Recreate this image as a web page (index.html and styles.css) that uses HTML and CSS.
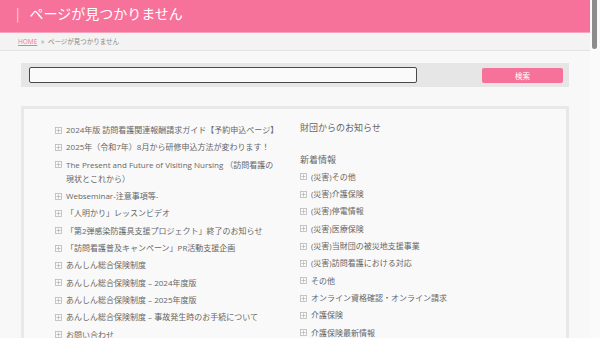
FILE: index.html
```html
<!DOCTYPE html>
<html lang="ja">
<head>
<meta charset="utf-8">
<title>ページが見つかりません</title>
<link rel="stylesheet" href="styles.css">
</head>
<body>
<div class="page">
  <header class="site-title">
    <span class="bar">|</span>
    <h1>ページが見つかりません</h1>
  </header>
  <nav class="breadcrumb"><a href="#">HOME</a> <span class="sep">»</span> ページが見つかりません</nav>
  <main class="main">
    <form class="search">
      <input class="search-input" type="text">
      <button class="search-btn" type="button">検索</button>
    </form>
    <section class="content">
      <ul class="list left">
        <li><svg class="ico" viewBox="0 0 7 7"><rect x="0.5" y="0.5" width="6" height="6"/><path d="M3.5 1.5v4M1.5 3.5h4"/></svg><span>2024年版 訪問看護関連報酬請求ガイド【予約申込ページ】</span></li>
        <li><svg class="ico" viewBox="0 0 7 7"><rect x="0.5" y="0.5" width="6" height="6"/><path d="M3.5 1.5v4M1.5 3.5h4"/></svg><span>2025年（令和7年）8月から研修申込方法が変わります！</span></li>
        <li><svg class="ico" viewBox="0 0 7 7"><rect x="0.5" y="0.5" width="6" height="6"/><path d="M3.5 1.5v4M1.5 3.5h4"/></svg><span>The Present and Future of Visiting Nursing （訪問看護の現状とこれから）</span></li>
        <li><svg class="ico" viewBox="0 0 7 7"><rect x="0.5" y="0.5" width="6" height="6"/><path d="M3.5 1.5v4M1.5 3.5h4"/></svg><span>Webseminar-注意事項等-</span></li>
        <li><svg class="ico" viewBox="0 0 7 7"><rect x="0.5" y="0.5" width="6" height="6"/><path d="M3.5 1.5v4M1.5 3.5h4"/></svg><span>「人明かり」レッスンビデオ</span></li>
        <li><svg class="ico" viewBox="0 0 7 7"><rect x="0.5" y="0.5" width="6" height="6"/><path d="M3.5 1.5v4M1.5 3.5h4"/></svg><span>「第2弾感染防護具支援プロジェクト」終了のお知らせ</span></li>
        <li><svg class="ico" viewBox="0 0 7 7"><rect x="0.5" y="0.5" width="6" height="6"/><path d="M3.5 1.5v4M1.5 3.5h4"/></svg><span>「訪問看護普及キャンペーン」PR活動支援企画</span></li>
        <li><svg class="ico" viewBox="0 0 7 7"><rect x="0.5" y="0.5" width="6" height="6"/><path d="M3.5 1.5v4M1.5 3.5h4"/></svg><span>あんしん総合保険制度</span></li>
        <li><svg class="ico" viewBox="0 0 7 7"><rect x="0.5" y="0.5" width="6" height="6"/><path d="M3.5 1.5v4M1.5 3.5h4"/></svg><span>あんしん総合保険制度 – 2024年度版</span></li>
        <li><svg class="ico" viewBox="0 0 7 7"><rect x="0.5" y="0.5" width="6" height="6"/><path d="M3.5 1.5v4M1.5 3.5h4"/></svg><span>あんしん総合保険制度 – 2025年度版</span></li>
        <li><svg class="ico" viewBox="0 0 7 7"><rect x="0.5" y="0.5" width="6" height="6"/><path d="M3.5 1.5v4M1.5 3.5h4"/></svg><span>あんしん総合保険制度 – 事故発生時のお手続について</span></li>
        <li><svg class="ico" viewBox="0 0 7 7"><rect x="0.5" y="0.5" width="6" height="6"/><path d="M3.5 1.5v4M1.5 3.5h4"/></svg><span>お問い合わせ</span></li>
      </ul>
      <div class="right">
        <h2 class="heading first">財団からのお知らせ</h2>
        <h2 class="heading">新着情報</h2>
        <ul class="list">
          <li><svg class="ico" viewBox="0 0 7 7"><rect x="0.5" y="0.5" width="6" height="6"/><path d="M3.5 1.5v4M1.5 3.5h4"/></svg><span>(災害)その他</span></li>
          <li><svg class="ico" viewBox="0 0 7 7"><rect x="0.5" y="0.5" width="6" height="6"/><path d="M3.5 1.5v4M1.5 3.5h4"/></svg><span>(災害)介護保険</span></li>
          <li><svg class="ico" viewBox="0 0 7 7"><rect x="0.5" y="0.5" width="6" height="6"/><path d="M3.5 1.5v4M1.5 3.5h4"/></svg><span>(災害)停電情報</span></li>
          <li><svg class="ico" viewBox="0 0 7 7"><rect x="0.5" y="0.5" width="6" height="6"/><path d="M3.5 1.5v4M1.5 3.5h4"/></svg><span>(災害)医療保険</span></li>
          <li><svg class="ico" viewBox="0 0 7 7"><rect x="0.5" y="0.5" width="6" height="6"/><path d="M3.5 1.5v4M1.5 3.5h4"/></svg><span>(災害)当財団の被災地支援事業</span></li>
          <li><svg class="ico" viewBox="0 0 7 7"><rect x="0.5" y="0.5" width="6" height="6"/><path d="M3.5 1.5v4M1.5 3.5h4"/></svg><span>(災害)訪問看護における対応</span></li>
          <li><svg class="ico" viewBox="0 0 7 7"><rect x="0.5" y="0.5" width="6" height="6"/><path d="M3.5 1.5v4M1.5 3.5h4"/></svg><span>その他</span></li>
          <li><svg class="ico" viewBox="0 0 7 7"><rect x="0.5" y="0.5" width="6" height="6"/><path d="M3.5 1.5v4M1.5 3.5h4"/></svg><span>オンライン資格確認・オンライン請求</span></li>
          <li><svg class="ico" viewBox="0 0 7 7"><rect x="0.5" y="0.5" width="6" height="6"/><path d="M3.5 1.5v4M1.5 3.5h4"/></svg><span>介護保険</span></li>
          <li><svg class="ico" viewBox="0 0 7 7"><rect x="0.5" y="0.5" width="6" height="6"/><path d="M3.5 1.5v4M1.5 3.5h4"/></svg><span>介護保険最新情報</span></li>
        </ul>
      </div>
    </section>
  </main>
</div>
<div class="scrollbar"><div class="thumb"></div></div>
</body>
</html>
```

FILE: styles.css
```css
html, body {
  margin: 0;
  padding: 0;
  height: 338px;
  overflow: hidden;
}
body {
  display: flex;
  background: #f9f9f9;
  font-family: "Open Sans", "Noto Sans CJK JP", sans-serif;
  color: #666;
}
.page {
  width: 590px;
  flex: none;
  background: #f8f8f8;
}
.scrollbar {
  width: 10px;
  flex: none;
  background: #fafafa;
}
.thumb {
  margin-left: 2px;
  width: 5px;
  height: 49px;
  background: #8c8c8c;
  border-radius: 0 0 3px 3px;
}
.site-title {
  height: 33px;
  box-sizing: border-box;
  background: #f7729b;
  border-bottom: 1px solid #f6a3bb;
  display: flex;
  align-items: center;
  padding: 0 0 6px 16px;
  color: #fff;
}
.site-title .bar {
  font-family: "Noto Sans CJK JP", sans-serif;
  font-size: 13px;
  color: #fbd3df;
  margin-right: 10px;
}
.site-title h1 {
  margin: 0;
  font-family: "Noto Sans CJK JP", sans-serif;
  font-weight: 400;
  font-size: 14px;
  line-height: 20px;
  color: #fff;
}
.breadcrumb {
  height: 17px;
  background: #f3f3f3;
  border-bottom: 1px solid #e3e3e3;
  padding-left: 18px;
  font-size: 6.5px;
  line-height: 17px;
  color: #888;
}
.breadcrumb a {
  color: #f7729b;
  text-decoration: underline;
}
.breadcrumb .sep {
  margin: 0 2px;
}
.main {
  padding: 12px 21px 0 21px;
}
.search {
  margin: 0;
  height: 24px;
  box-sizing: border-box;
  background: #e6e6e6;
  display: flex;
  align-items: center;
  padding: 0 6px 0 8px;
}
.search-input {
  width: 388px;
  height: 16px;
  box-sizing: border-box;
  margin: 0;
  padding: 0;
  border: 1.5px solid #4a4a4a;
  border-radius: 2px;
  background: #fafafa;
}
.search-btn {
  margin-left: auto;
  width: 81px;
  height: 15px;
  padding: 0;
  border: none;
  border-radius: 2px;
  background: #f7729b;
  color: #fff;
  font-family: "Noto Sans CJK JP", sans-serif;
  font-size: 7.5px;
  line-height: 15px;
}
.content {
  margin-top: 19px;
  border: 3px solid #e8e8e8;
  background: #f9f9f9;
  display: grid;
  grid-template-columns: 226px 1fr;
  column-gap: 19px;
  padding: 14px 0 20px 31px;
  align-items: start;
}
.list {
  list-style: none;
  margin: 0;
  padding: 0;
}
.list li {
  display: flex;
  align-items: flex-start;
  font-size: 8px;
  line-height: 14px;
  margin-bottom: 3.35px;
}
.ico {
  width: 7px;
  height: 7px;
  flex: none;
  margin: 3.5px 4px 0 0;
  fill: none;
  stroke: #b8b8b8;
  stroke-width: 0.8;
}
.heading {
  margin: 0;
  font-weight: 400;
  font-size: 9px;
  line-height: 10px;
  color: #666;
}
.heading.first {
  margin-bottom: 22px;
}
.heading + .list {
  margin-top: 4.7px;
}
```
